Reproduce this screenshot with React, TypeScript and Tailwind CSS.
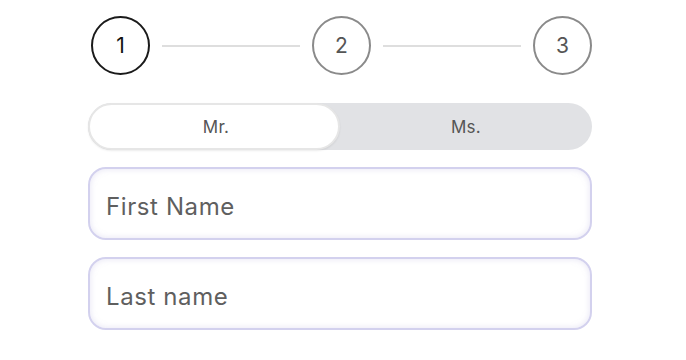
import React from "react";

function Step({ n, active }: { n: number; active?: boolean }) {
  return (
    <div
      className={
        "flex h-[59px] w-[59px] shrink-0 items-center justify-center rounded-full border-2 pt-[1px] text-[21px] " +
        (active ? "border-[#1a1a1a] text-[#111]" : "border-[#8a8a8a] text-[#555]")
      }
    >
      {n}
    </div>
  );
}

function Line() {
  return <div className="mx-[12px] h-[2px] flex-1 bg-[#dedede]" />;
}

export default function App() {
  return (
    <div className="flex h-[360px] w-[686px] bg-white pl-[88px] pt-[16px] font-['Inter',sans-serif]">
      <div className="flex w-[504px] flex-col">
        <div className="flex items-center pl-[3px]">
          <Step n={1} active />
          <Line />
          <Step n={2} />
          <Line />
          <Step n={3} />
        </div>
        <div className="mt-[28px] flex h-[47px] rounded-full bg-[#e1e2e5]">
          <div className="flex w-[252px] items-center justify-center rounded-full border-2 border-[#e6e6e6] bg-white pl-[4px] pt-[3px] text-[17px] tracking-[0.3px] text-[#555] shadow-[0_1px_2px_rgba(0,0,0,0.08)]">
            Mr.
          </div>
          <div className="flex flex-1 items-center justify-center pt-[3px] text-[17px] tracking-[0.3px] text-[#555]">
            Ms.
          </div>
        </div>
        <div className="mt-[17px] flex h-[73px] items-center rounded-[18px] border-2 border-[#d3d1ee] bg-white pl-[16px] pt-[6px] text-[24px] tracking-[0.6px] text-[#5f5f5f] shadow-[inset_0_0_6px_rgba(180,175,220,0.35)]">
          First Name
        </div>
        <div className="mt-[17px] flex h-[73px] items-center rounded-[18px] border-2 border-[#d3d1ee] bg-white pl-[16px] pt-[6px] text-[24px] tracking-[0.6px] text-[#5f5f5f] shadow-[inset_0_0_6px_rgba(180,175,220,0.35)]">
          Last name
        </div>
      </div>
    </div>
  );
}
